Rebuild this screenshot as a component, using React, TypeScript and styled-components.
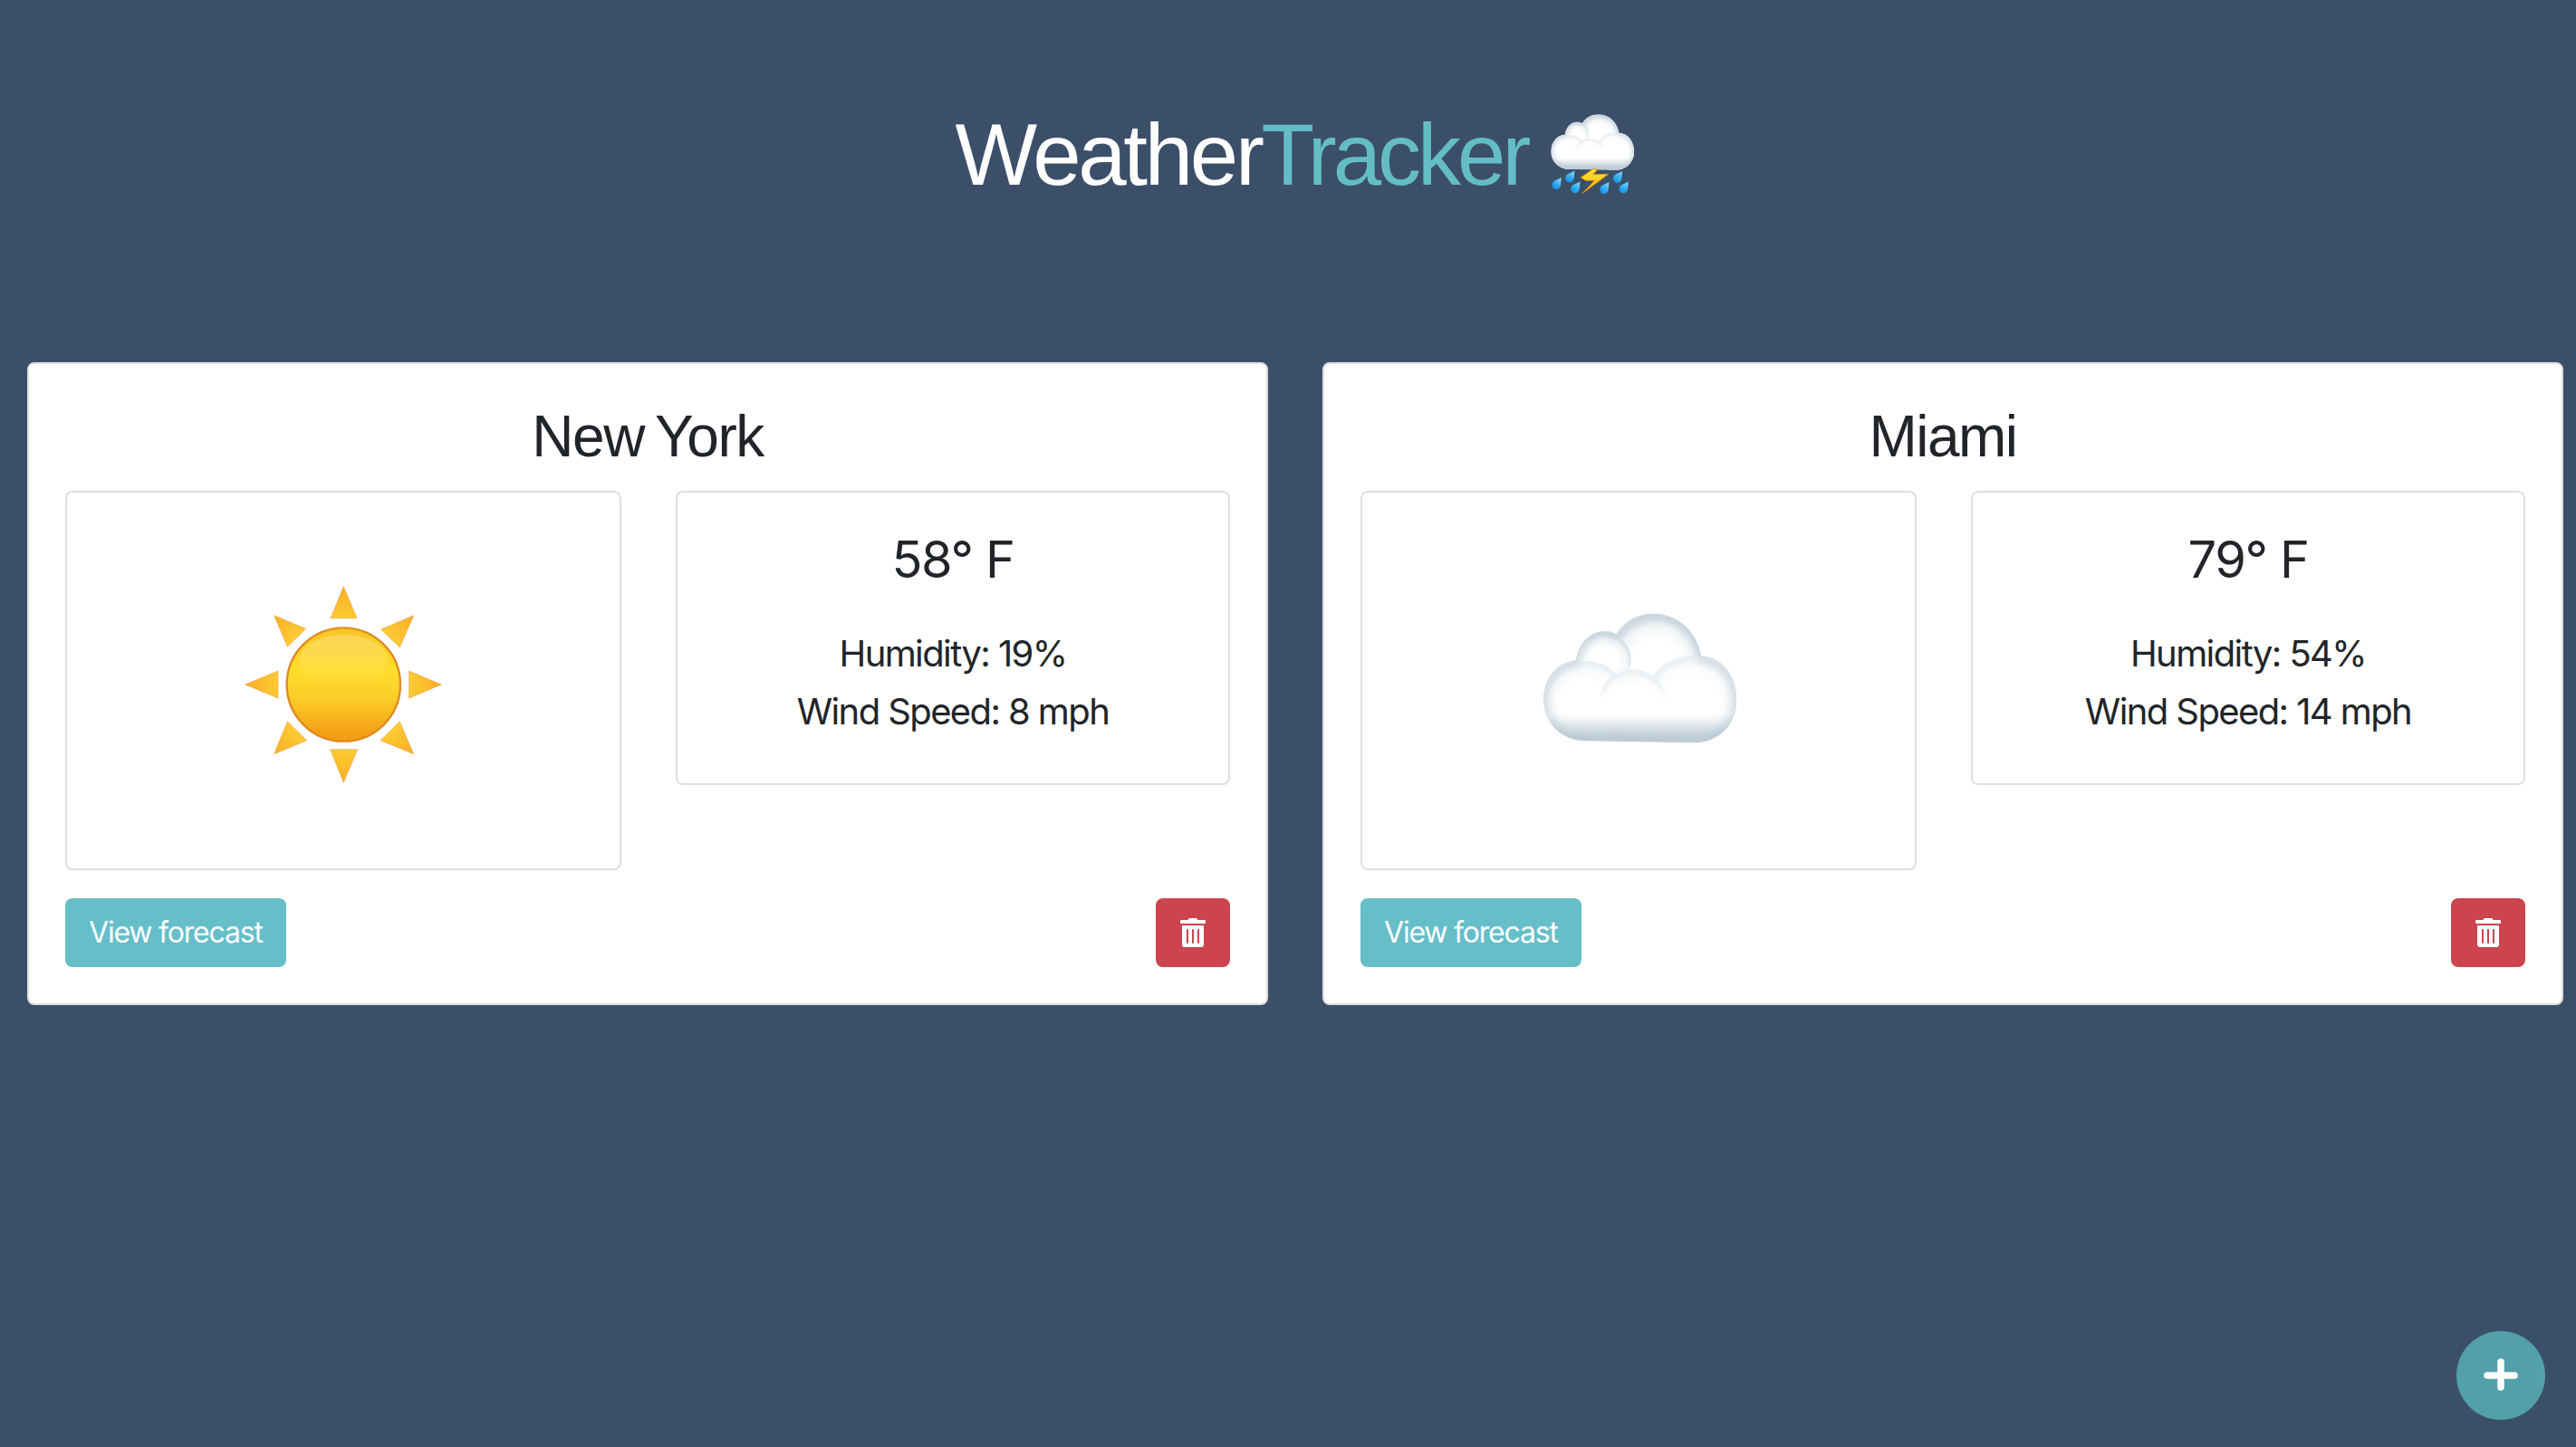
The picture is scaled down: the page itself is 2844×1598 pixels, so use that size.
import React from 'react';
import styled, { createGlobalStyle } from 'styled-components';
import { FaTrashAlt } from 'react-icons/fa';

const GlobalStyle = createGlobalStyle`
  html, body {
    margin: 0;
    height: 100%;
    background: #3c4f69;
  }
  body {
    font-family: Inter, "Liberation Sans", sans-serif;
    color: #212529;
    overflow: hidden;
  }
  * {
    box-sizing: border-box;
  }
`;

const Page = styled.div`
  height: 1598px;
  padding: 0 14px 0 30px;
`;

const Header = styled.header`
  height: 400px;
  padding-top: 110px;
`;

const Title = styled.h1`
  margin: 0;
  height: 115px;
  font-family: "Liberation Sans", Inter, sans-serif;
  font-size: 96px;
  line-height: 115px;
  font-weight: 400;
  letter-spacing: -3.3px;
  text-align: center;
  color: #fff;
  white-space: nowrap;
`;

const Accent = styled.span`
  letter-spacing: -4px;
  color: #64bdc6;
`;

const StormIcon = styled.svg`
  width: 115px;
  height: 120px;
  margin-left: 4px;
  vertical-align: -26px;
`;

const CardGrid = styled.main`
  display: grid;
  grid-template-columns: 1fr 1fr;
  gap: 60px;
`;

const Card = styled.section`
  height: 710px;
  padding: 40px;
  background: #fff;
  border: 2px solid #dfdfdf;
  border-radius: 8px;
`;

const CityName = styled.h2`
  margin: 0 0 21px;
  padding-top: 2px;
  font-family: "Liberation Sans", Inter, sans-serif;
  font-size: 64px;
  line-height: 77px;
  font-weight: 400;
  letter-spacing: -1.5px;
  word-spacing: -3px;
  text-align: center;
`;

const Columns = styled.div`
  display: grid;
  grid-template-columns: 614px 612px;
  gap: 60px;
  align-items: start;
`;

const Panel = styled.div`
  border: 2px solid #dfdfdf;
  border-radius: 8px;
`;

const IconPanel = styled(Panel)`
  height: 419px;
  display: flex;
  align-items: center;
  justify-content: center;
`;

const EmojiIcon = styled.svg`
  width: 300px;
  height: 300px;
`;

const StatsPanel = styled(Panel)`
  height: 325px;
  padding: 41px 40px 0;
  text-align: center;
`;

const Temperature = styled.h3`
  margin: 0 0 46px;
  font-size: 56px;
  line-height: 67px;
  font-weight: 400;
  letter-spacing: -1.4px;
`;

const Stat = styled.p`
  margin: 0 0 16px;
  font-size: 40px;
  line-height: 48px;
  font-weight: 400;
  letter-spacing: -1.6px;
`;

const Actions = styled.div`
  display: flex;
  justify-content: space-between;
  margin-top: 31px;
`;

const ForecastButton = styled.button`
  height: 76px;
  padding: 0 24px 2px;
  font: inherit;
  font-size: 32px;
  letter-spacing: -1.2px;
  color: #fff;
  background: #66bec8;
  border: 2px solid #66bec8;
  border-radius: 8px;
`;

const DeleteButton = styled.button`
  width: 82px;
  height: 76px;
  display: flex;
  align-items: center;
  justify-content: center;
  padding: 0;
  font-size: 32px;
  color: #fff;
  background: #cc444d;
  border: 2px solid #cc444d;
  border-radius: 8px;
`;

const AddButton = styled.button`
  position: fixed;
  right: 34px;
  bottom: 30px;
  width: 98px;
  height: 98px;
  display: flex;
  align-items: center;
  justify-content: center;
  padding: 0;
  background: #52a0aa;
  border: none;
  border-radius: 50%;
`;

const CLOUD_OUTLINE =
  'M240 265C245 210 290 165 340 168C355 168 365 172 372 178C400 130 450 108 500 110C580 112 640 170 655 250C730 255 772 320 772 395C772 480 710 538 630 538L270 532C190 530 132 470 132 395C132 320 180 268 240 265Z';

// same cloud is used big on the card and small in the title
const CloudShape = ({ id }: { id: string }) => (
  <>
    <defs>
      <radialGradient id={`${id}-back`} cx="50%" cy="56%" r="50%">
        <stop offset="0.55" stopColor="#fff" />
        <stop offset="0.85" stopColor="#f3f6f7" />
        <stop offset="1" stopColor="#dbe4ea" />
      </radialGradient>
      <radialGradient id={`${id}-front`} cx="50%" cy="55%" r="50%">
        <stop offset="0.6" stopColor="#fff" />
        <stop offset="0.88" stopColor="#fafbfc" />
        <stop offset="1" stopColor="#edf1f4" />
      </radialGradient>
      <linearGradient id={`${id}-shade`} x1="0" y1="0" x2="0" y2="1">
        <stop offset="0.78" stopColor="#b3c4d0" stopOpacity="0" />
        <stop offset="0.94" stopColor="#b3c4d0" stopOpacity="0.75" />
        <stop offset="1" stopColor="#c3d0da" />
      </linearGradient>
      <filter id={`${id}-blur`} x="-20%" y="-20%" width="140%" height="140%">
        <feGaussianBlur stdDeviation="18" />
      </filter>
      <clipPath id={`${id}-clip`}>
        <path d={CLOUD_OUTLINE} />
      </clipPath>
    </defs>
    <g clipPath={`url(#${id}-clip)`}>
      <path d={CLOUD_OUTLINE} fill="#f4f6f8" />
      <ellipse cx="505" cy="262" rx="152" ry="154" fill={`url(#${id}-back)`} />
      <circle cx="328" cy="262" r="94" fill={`url(#${id}-back)`} />
      <ellipse cx="272" cy="402" rx="142" ry="136" fill={`url(#${id}-front)`} />
      <ellipse cx="622" cy="398" rx="152" ry="148" fill={`url(#${id}-front)`} />
      <ellipse cx="428" cy="405" rx="112" ry="110" fill={`url(#${id}-front)`} />
      <ellipse cx="450" cy="440" rx="270" ry="70" fill="#fff" filter={`url(#${id}-blur)`} />
      <path d={CLOUD_OUTLINE} fill={`url(#${id}-shade)`} />
      <path
        d={CLOUD_OUTLINE}
        fill="none"
        stroke="#b4c5d1"
        strokeOpacity="0.85"
        strokeWidth="22"
        filter={`url(#${id}-blur)`}
      />
    </g>
  </>
);

const RAIN_DROPS = [
  [88, 278],
  [132, 255],
  [150, 291],
  [246, 293],
  [290, 257],
  [310, 291],
];

const StormCloud = () => (
  <StormIcon viewBox="0 0 345 360">
    <defs>
      <linearGradient id="drop" x1="0" y1="0" x2="0" y2="1">
        <stop offset="0" stopColor="#8fe2ff" />
        <stop offset="0.55" stopColor="#35b2f4" />
        <stop offset="1" stopColor="#1690e4" />
      </linearGradient>
      <linearGradient id="bolt" x1="0" y1="0" x2="0" y2="1">
        <stop offset="0" stopColor="#ffe53a" />
        <stop offset="1" stopColor="#ffb300" />
      </linearGradient>
    </defs>
    <g transform="translate(10 1.5) scale(0.431)">
      <CloudShape id="storm" />
    </g>
    {RAIN_DROPS.map(([x, y]) => (
      <path
        key={x}
        transform={`translate(${x} ${y}) rotate(35)`}
        d="M0 -24C4 -14 14 -4 14 6A14 14 0 0 1 -14 6C-14 -4 -4 -14 0 -24Z"
        fill="url(#drop)"
      />
    ))}
    <path
      d="M166 258L205 231L222 231L206 248L257 247L172 310L212 268L182 268Z"
      fill="url(#bolt)"
      stroke="#e8920a"
      strokeWidth="3"
      strokeLinejoin="round"
    />
  </StormIcon>
);

const SUN_RAYS = [
  '448,140 405,245 492,245',
  '680,236 572,282 634,342',
  '772,465 665,420 665,510',
  '680,695 570,650 634,587',
  '448,790 404,680 494,680',
  '218,695 326,650 262,587',
  '122,465 231,420 231,510',
  '218,236 323,280 262,340',
];

const SunIcon = () => (
  <EmojiIcon viewBox="-3 3 900 900">
    <defs>
      <linearGradient id="sun-face" x1="0" y1="0" x2="0" y2="1">
        <stop offset="0" stopColor="#f9c424" />
        <stop offset="0.38" stopColor="#ffde2d" />
        <stop offset="0.62" stopColor="#fbcd28" />
        <stop offset="0.88" stopColor="#f5a618" />
        <stop offset="1" stopColor="#f29c15" />
      </linearGradient>
      <linearGradient id="sun-shine" x1="0" y1="0" x2="0" y2="1">
        <stop offset="0" stopColor="#fff" stopOpacity="0.24" />
        <stop offset="1" stopColor="#fff" stopOpacity="0" />
      </linearGradient>
      <radialGradient id="sun-ray" gradientUnits="userSpaceOnUse" cx="448" cy="465" r="330">
        <stop offset="0.6" stopColor="#fdd137" />
        <stop offset="1" stopColor="#f8ac24" />
      </radialGradient>
    </defs>
    {SUN_RAYS.map((points) => (
      <polygon
        key={points}
        points={points}
        fill="url(#sun-ray)"
        stroke="#f0a244"
        strokeOpacity="0.6"
        strokeWidth="3"
        strokeLinejoin="round"
      />
    ))}
    <circle cx="448" cy="465" r="188" fill="url(#sun-face)" stroke="#de8a22" strokeWidth="7" />
    <ellipse cx="448" cy="385" rx="145" ry="85" fill="url(#sun-shine)" />
  </EmojiIcon>
);

const CloudIcon = () => (
  <EmojiIcon viewBox="-3 -117 900 900">
    <CloudShape id="card-cloud" />
  </EmojiIcon>
);

const PlusIcon = () => (
  <svg width="40" height="40" viewBox="0 0 40 40">
    <path d="M20 5V33M5 20H35" stroke="#fff" strokeWidth="7.5" strokeLinecap="round" />
  </svg>
);

const cities = [
  { name: 'New York', temp: 58, humidity: 19, wind: 8, icon: <SunIcon /> },
  { name: 'Miami', temp: 79, humidity: 54, wind: 14, icon: <CloudIcon /> },
];

export default function App() {
  return (
    <Page>
      <GlobalStyle />
      <Header>
        <Title>
          Weather<Accent>Tracker</Accent>
          <StormCloud />
        </Title>
      </Header>
      <CardGrid>
        {cities.map((city) => (
          <Card key={city.name}>
            <CityName>{city.name}</CityName>
            <Columns>
              <IconPanel>{city.icon}</IconPanel>
              <StatsPanel>
                <Temperature>{city.temp}° F</Temperature>
                <Stat>Humidity: {city.humidity}%</Stat>
                <Stat>Wind Speed: {city.wind} mph</Stat>
              </StatsPanel>
            </Columns>
            <Actions>
              <ForecastButton>View forecast</ForecastButton>
              <DeleteButton>
                <FaTrashAlt />
              </DeleteButton>
            </Actions>
          </Card>
        ))}
      </CardGrid>
      <AddButton>
        <PlusIcon />
      </AddButton>
    </Page>
  );
}
